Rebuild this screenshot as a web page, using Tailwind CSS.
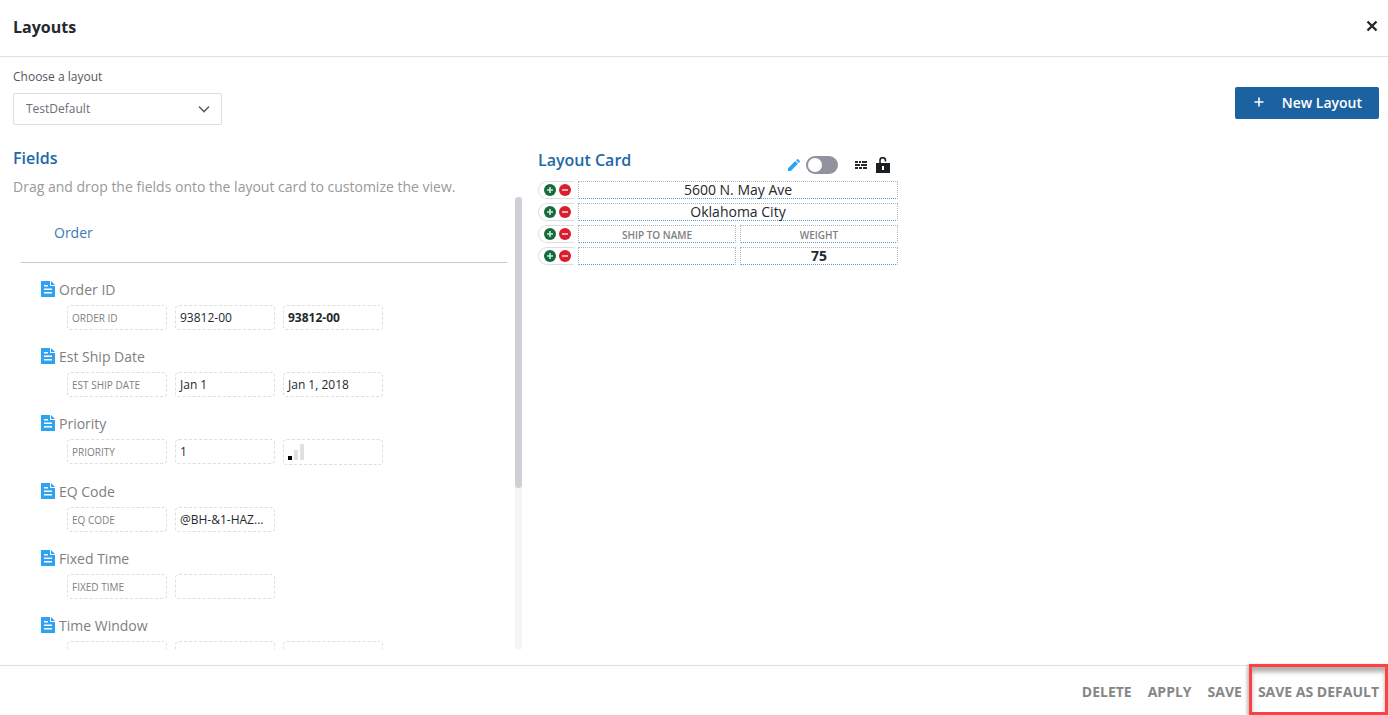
<!DOCTYPE html>
<html lang="en">
<head>
  <meta charset="utf-8">
  <meta name="viewport" content="width=device-width, initial-scale=1">
  <title>Layouts</title>
  <script src="https://cdn.jsdelivr.net/npm/@tailwindcss/browser@4"></script>
</head>
<body class="bg-white font-['Open_Sans',sans-serif] text-[#25282d]">
  <!-- Shared icons -->
  <svg class="hidden">
    <symbol id="doc" viewBox="0 0 14 16">
      <path d="M0 0h9v5h5v11H0z" fill="#2ea3f2"/>
      <path d="M10 0l4 4h-4z" fill="#2ea3f2"/>
      <path d="M3 4h4v1.500H3zM3 7.500h8V9H3zM3 11h8v1.500H3z" fill="#fff"/>
    </symbol>
    <symbol id="plus" viewBox="0 0 12 12">
      <circle cx="6" cy="6" r="6" fill="#156b3c"/>
      <path d="M6 3v6M3 6h6" stroke="#d5e8dc" stroke-width="1.600"/>
    </symbol>
    <symbol id="minus" viewBox="0 0 12 12">
      <circle cx="6" cy="6" r="6" fill="#d81e2f"/>
      <path d="M3 6h6" stroke="#f8d4d7" stroke-width="1.600"/>
    </symbol>
  </svg>

  <div class="flex h-screen flex-col">
    <!-- Header -->
    <header class="flex h-[57px] shrink-0 items-center justify-between border-b border-[#dfdfe5] pr-[10px] pb-0.5 pl-[13px]">
      <h1 class="text-base font-bold">Layouts</h1>
      <button type="button" aria-label="Close" class="-mr-1 p-1 pb-1.5">
        <svg class="size-3" viewBox="0 0 12 12"><path d="M1.500 1.500l9 9M10.500 1.500l-9 9" stroke="#25282d" stroke-width="2.400"/></svg>
      </button>
    </header>

    <main class="flex min-h-0 flex-1 flex-col pt-3 pr-[9px] pb-4 pl-[13px]">
      <!-- Layout picker -->
      <div class="flex items-end justify-between">
        <div class="flex flex-col gap-2">
          <label for="layout" class="text-xs text-[#55565f]">Choose a layout</label>
          <div class="relative">
            <select id="layout" class="h-8 w-[209px] appearance-none rounded-xs border border-[#dcdce4] bg-white px-3 text-xs text-[#6c6d78]">
              <option>TestDefault</option>
            </select>
            <svg class="pointer-events-none absolute top-3 right-3 h-2 w-3" viewBox="0 0 12 8"><path d="M1 1.500l5 5 5-5" fill="none" stroke="#5d6068" stroke-width="1.600"/></svg>
          </div>
        </div>
        <button type="button" class="mb-1.5 flex h-8 items-center gap-[18px] rounded-xs bg-[#1c62a0] pr-[17px] pl-[19px] text-sm font-semibold text-white">
          <svg class="mb-0.5 size-2.5" viewBox="0 0 10 10"><path d="M5 .5v9M.5 5h9" stroke="#fff" stroke-width="1.600"/></svg>
          New Layout
        </button>
      </div>

      <div class="flex min-h-0 flex-1 gap-4 pt-[21px]">
        <!-- Fields -->
        <section class="flex w-[509px] shrink-0 flex-col">
          <h2 class="text-base font-semibold text-[#2068a8]">Fields</h2>
          <p class="mt-[7px] h-5 text-sm text-[#999]">Drag and drop the fields onto the layout card to customize the view.</p>
          <div class="flex min-h-0 flex-1 justify-between">
            <div class="mx-2 flex-1 overflow-hidden">
              <h3 class="mb-4 border-b border-[#c8c8d0] px-[33px] pt-[26px] pb-[19px] text-sm text-[#3b79b8]">Order</h3>
              <div id="fieldList" class="pl-5"></div>
            </div>
            <div class="w-[7px] bg-[#f5f5f5]">
              <div class="h-[291px] rounded-full bg-[#cfcfd6]"></div>
            </div>
          </div>
        </section>

        <!-- Layout card -->
        <section class="w-[360px] shrink-0 pt-0.5">
          <div class="mb-[9px] flex h-6 items-center">
            <h2 class="flex-1 text-base font-semibold text-[#2068a8]">Layout Card</h2>
            <div class="flex items-center pt-2.5 pr-2">
              <svg class="mr-1.5 size-3" viewBox="0 0 12 12" fill="#2ea3f2"><path d="M0 12v-2.800L7.200 2 10 4.800 2.800 12zM8 1.200L9 .2q.5-.4 1 0L11.800 2q.4.500 0 1l-1 1z"/></svg>
              <label class="mr-[17px] flex">
                <input type="checkbox" aria-label="Edit mode" class="h-[18px] w-8 appearance-none rounded-full bg-[#9192a0] before:m-0.5 before:block before:size-3.5 before:rounded-full before:bg-white">
              </label>
              <button type="button" aria-label="Rows" class="mr-[9px]">
                <svg class="h-3 w-3" viewBox="0 0 12 12" fill="#25282d"><path d="M0 2h3v2H0zM4 2h2v2H4zM7 2h5v2H7zM0 5h5v2H0zM6 5h6v2H6zM0 8h3v2H0zM4 8h3v2H4zM8 8h4v2H8z"/></svg>
              </button>
              <button type="button" aria-label="Unlock">
                <svg class="h-4 w-[14px]" viewBox="0 0 14 16"><path d="M0 6h14v10H0zM6 9v4h2V9z" fill="#1b1f23" fill-rule="evenodd"/><path d="M4 7V3.500a2.700 2.700 0 0 1 5.500 0v1" fill="none" stroke="#1b1f23" stroke-width="1.600"/></svg>
              </button>
            </div>
          </div>
          <div id="cardRows" class="flex flex-col gap-1"></div>
        </section>
      </div>
    </main>

    <!-- Footer -->
    <footer class="flex h-[50px] shrink-0 items-center justify-end gap-4 border-t border-[#dfdfe5] pt-0.5 pr-[9px] text-sm font-bold text-[#868686]">
      <button type="button">DELETE</button>
      <button type="button">APPLY</button>
      <button type="button">SAVE</button>
      <div class="relative">
        <button type="button">SAVE AS DEFAULT</button>
        <div class="pointer-events-none absolute -inset-x-[9px] -top-[18px] -bottom-[13px] border-3 border-[#fb4141] shadow-[inset_0_5px_4px_#00000050,-2px_1px_3px_#00000040]"></div>
      </div>
    </footer>
  </div>

  <script>
    const bars = `
      <svg class="my-1 h-4 w-4" viewBox="0 0 16 16">
        <path d="M0 12h4v4H0z" fill="#000"/><path d="M6 6h4v10H6zM12 0h4v16h-4z" fill="#e0e0e0"/>
      </svg>`;

    const fields = [
      { name: 'Order ID', values: ['93812-00', '<b>93812-00</b>'] },
      { name: 'Est Ship Date', values: ['Jan 1', 'Jan 1, 2018'] },
      { name: 'Priority', values: ['1', bars] },
      { name: 'EQ Code', values: ['@BH-&amp;1-HAZ...'] },
      { name: 'Fixed Time', values: [''] },
      { name: 'Time Window', label: '', values: ['', ''] },
    ];

    document.getElementById('fieldList').innerHTML = fields.map(f => `
      <div class="mb-4">
        <div class="mb-1 flex h-[22px] items-center gap-1 text-sm text-[#808080]">
          <svg class="mb-0.5 h-4 w-3.5"><use href="#doc"/></svg>${f.name}
        </div>
        <div class="flex items-start gap-2 pl-[26px]">
          <div class="h-[25px] w-[100px] rounded border border-dashed border-[#dedede] px-1 text-[10px] leading-6 text-[#808080] uppercase">${f.label ?? f.name}</div>
          ${f.values.map(v => `<div class="min-h-[25px] w-[100px] truncate rounded border border-dashed border-[#dedede] px-1 text-xs leading-[23px]">${v}</div>`).join('')}
        </div>
      </div>
    `).join('');

    const labelClass = 'pt-0.5 text-[10px] font-semibold text-[#808080]';
    const cellClass = 'flex flex-1 items-center justify-center border border-dotted border-t-[#b4b4b4] border-r-[#b4b4b4] border-b-[#5b9fd0] border-l-[#b4b4b4]';

    const rows = [
      ['<span class="text-sm">5600 N. May Ave</span>'],
      ['<span class="text-sm">Oklahoma City</span>'],
      [`<span class="${labelClass}">SHIP TO NAME</span>`, `<span class="${labelClass}">WEIGHT</span>`],
      ['', '<span class="text-sm font-bold">75</span>'],
    ];

    document.getElementById('cardRows').innerHTML = rows.map(cells => `
      <div class="flex h-[18px] gap-1">
        <div class="flex w-9 items-center gap-[3px] rounded-l-full border border-r-0 border-[#dedede] pl-[5px]">
          <button type="button" aria-label="Add row"><svg class="size-3"><use href="#plus"/></svg></button>
          <button type="button" aria-label="Remove row"><svg class="size-3"><use href="#minus"/></svg></button>
        </div>
        ${cells.map(c => `<div class="${cellClass}">${c}</div>`).join('')}
      </div>
    `).join('');
  </script>
</body>
</html>
